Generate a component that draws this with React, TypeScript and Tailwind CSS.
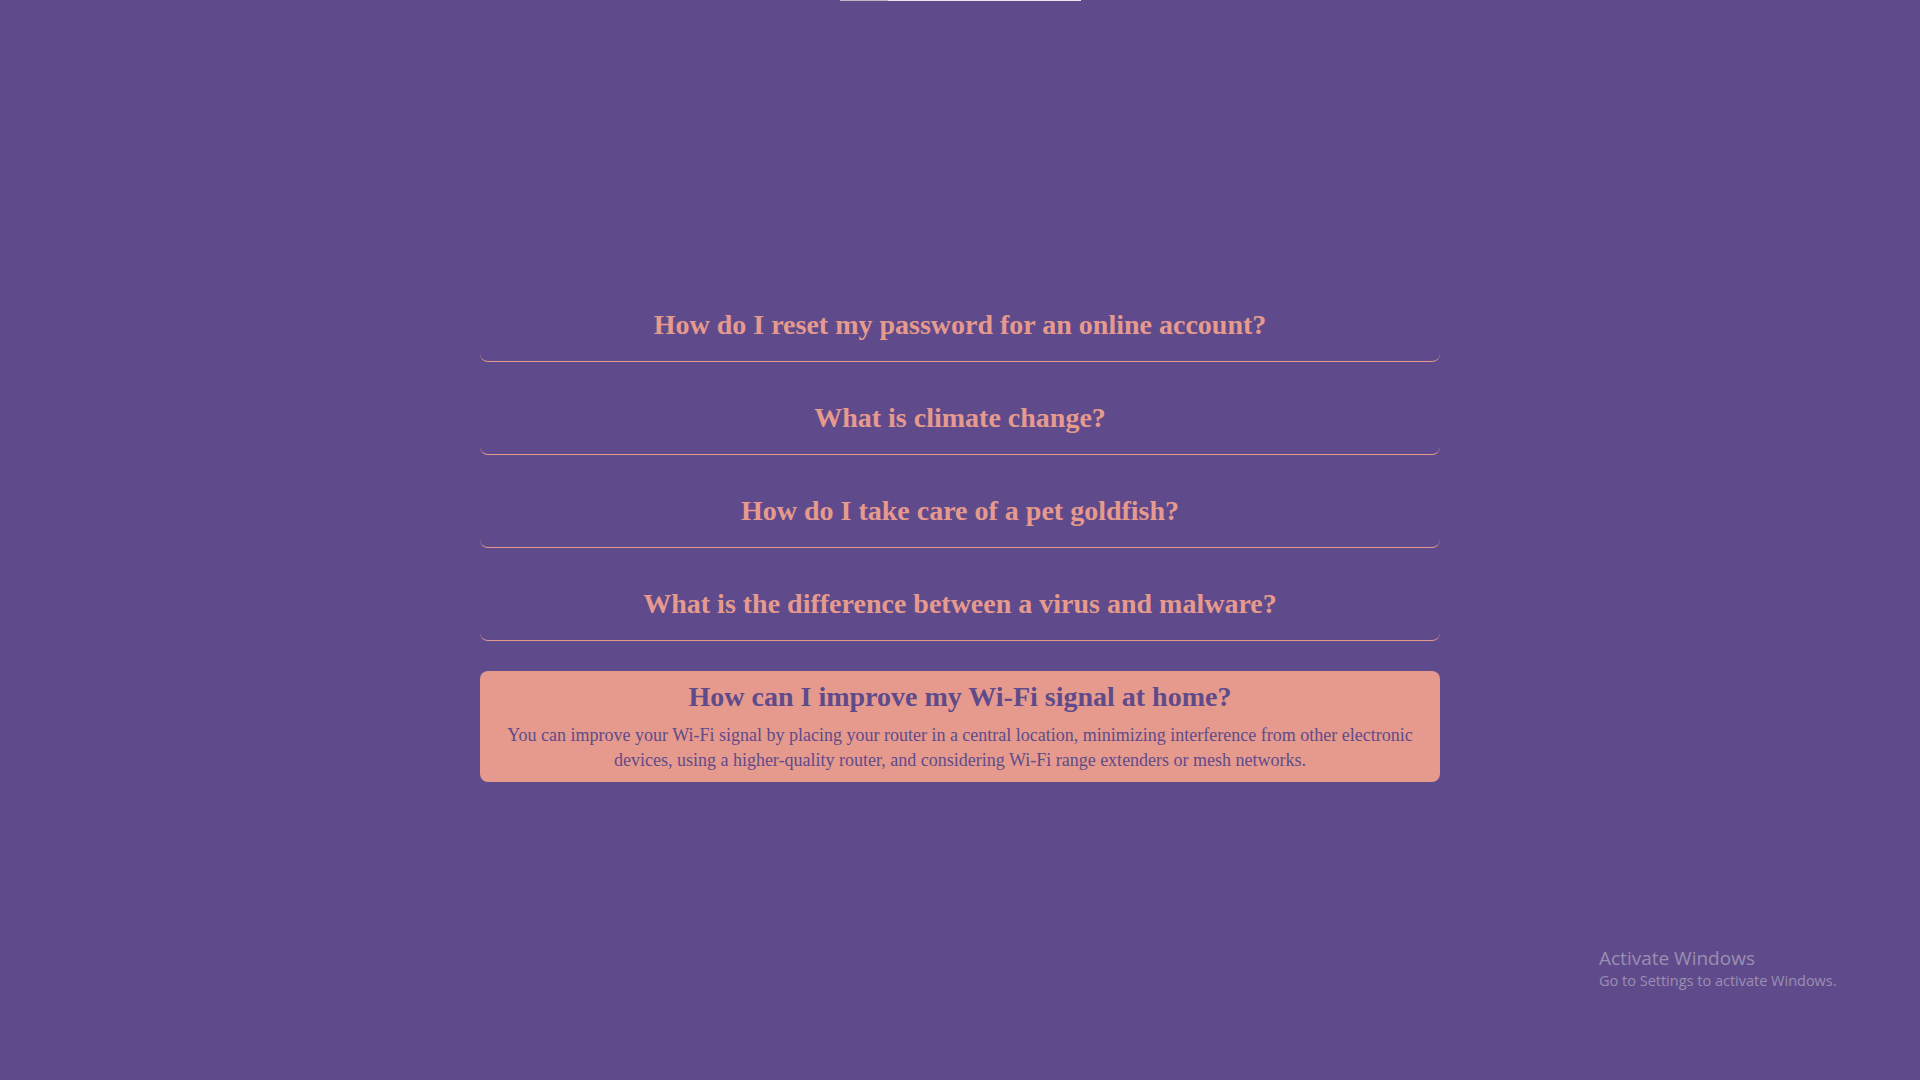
import React, { useState } from 'react';

const faqs = [
  {
    q: 'How do I reset my password for an online account?',
    a: 'Most online services offer a "Forgot password" link on the sign-in page. Follow the link, enter your email address and follow the instructions you receive to choose a new password.',
  },
  {
    q: 'What is climate change?',
    a: 'Climate change refers to long-term shifts in temperatures and weather patterns, mainly caused by human activities such as burning fossil fuels.',
  },
  {
    q: 'How do I take care of a pet goldfish?',
    a: 'Keep your goldfish in a spacious, filtered tank, change part of the water regularly and feed it a small amount of quality food once or twice a day.',
  },
  {
    q: 'What is the difference between a virus and malware?',
    a: 'Malware is any software designed to cause harm. A virus is one type of malware that spreads by attaching itself to other programs and files.',
  },
  {
    q: 'How can I improve my Wi-Fi signal at home?',
    a: 'You can improve your Wi-Fi signal by placing your router in a central location, minimizing interference from other electronic devices, using a higher-quality router, and considering Wi-Fi range extenders or mesh networks.',
  },
];

const App = () => {
  const [open, setOpen] = useState<number>(4);

  return (
    <div className="relative min-h-screen bg-[#5f4b8b] font-['Liberation_Serif','Times_New_Roman',serif]">
      {/* thin bar at the top */}
      <div className="mx-auto flex h-px w-[241px]">
        <div className="w-[48px] bg-[#b9b6bf]" />
        <div className="flex-1 bg-[#ebe9ee]" />
      </div>

      <div className="mx-auto flex w-[960px] flex-col gap-[30px] pt-[298px]">
        {faqs.map((item, i) => {
          const active = i === open;
          return (
            <div
              key={item.q}
              onClick={() => setOpen(i)}
              className={
                active
                  ? 'cursor-pointer rounded-lg bg-[#e69a8d] px-5 pt-2.5 pb-2.5 text-center'
                  : 'cursor-pointer rounded-lg border-b border-[#e69a8d] px-5 pt-2.5 pb-5 text-center'
              }
            >
              <h2
                className={
                  active
                    ? 'mb-2.5 text-[28px] leading-8 font-bold text-[#5f4b8b]'
                    : 'text-[28px] leading-8 font-bold text-[#e69a8d]'
                }
              >
                {item.q}
              </h2>
              {active && (
                <p className="text-[18px] leading-[24.5px] text-[#5f4b8b]">{item.a}</p>
              )}
            </div>
          );
        })}
      </div>

      {/* activation watermark */}
      <div className="absolute top-[946px] left-[1599px] font-['Open_Sans','Noto_Sans',sans-serif] text-[#9a8fb1]">
        <div className="text-[19px] leading-6">Activate Windows</div>
        <div className="text-[14.5px] leading-[21px]">Go to Settings to activate Windows.</div>
      </div>
    </div>
  );
};

export default App;
